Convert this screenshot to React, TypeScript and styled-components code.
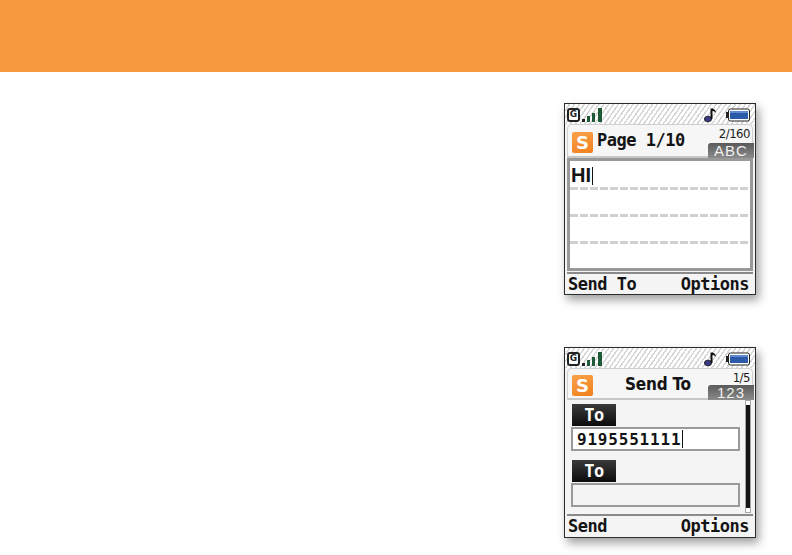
import React from "react";
import styled, { createGlobalStyle } from "styled-components";

const GlobalStyle = createGlobalStyle`
  html, body {
    margin: 0;
    padding: 0;
    background: #fff;
  }
  * { box-sizing: border-box; }
`;

const Page = styled.div`
  width: 792px;
  height: 555px;
  overflow: hidden;
  background: #fff;
`;

const Banner = styled.div`
  height: 72px;
  background: #f79a3e;
`;

const Shots = styled.div`
  display: flex;
  flex-direction: column;
  align-items: flex-end;
  gap: 52px;
  padding: 31px 36px 0 0;
`;

const Phone = styled.div<{ $height: number }>`
  width: 192px;
  height: ${(p) => p.$height}px;
  display: flex;
  flex-direction: column;
  background: #f4f4f4;
  border: 1px solid #2c2c2c;
  box-shadow: 3px 5px 9px rgba(0, 0, 0, 0.38);
`;

const StatusBar = styled.div`
  height: 20px;
  flex: none;
  display: flex;
  align-items: center;
  padding: 1px 5px 0 2px;
  background: repeating-linear-gradient(
    -55deg,
    #fff 0 2.5px,
    #d6d6d6 2.5px 4px
  );
`;

const NetworkBadge = styled.span`
  width: 13px;
  height: 14px;
  margin-right: 2px;
  display: flex;
  align-items: center;
  justify-content: center;
  border: 2px solid #222;
  border-radius: 3px;
  background: #fff;
  color: #222;
  font: bold 9px/1 "DejaVu Sans", sans-serif;
`;

const Spacer = styled.div`
  flex: 1;
`;

const IconGap = styled.div`
  width: 8px;
  flex: none;
`;

const Header = styled.div<{ $height: number; $top: number }>`
  position: relative;
  height: ${(p) => p.$height}px;
  flex: none;
  margin: 0 2px;
  padding: ${(p) => p.$top}px 0 0 4px;
  display: flex;
  align-items: flex-start;
  background: #f6f6f6;
  border: 1px solid #cfcfcf;
  border-bottom: 2px solid #c8c8c8;
  border-radius: 5px 5px 0 0;
`;

const Logo = styled.span`
  width: 21px;
  height: 21px;
  flex: none;
  display: flex;
  align-items: center;
  justify-content: center;
  border-radius: 2px;
  background: linear-gradient(160deg, #f9a34a, #f17f1d);
  color: #fff;
  font: bold 18px/1 "DejaVu Sans", sans-serif;
`;

const PageTitle = styled.span`
  margin-left: 4px;
  margin-top: -2px;
  color: #141414;
  font: bold 17px/21px "DejaVu Sans Mono", monospace;
  letter-spacing: -0.5px;
  white-space: nowrap;
`;

const ScreenTitle = styled.span`
  margin-left: 32px;
  color: #141414;
  font: bold 17px/19px "DejaVu Sans", sans-serif;
  font-stretch: condensed;
  letter-spacing: -0.2px;
  white-space: nowrap;
`;

const Counter = styled.span`
  position: absolute;
  top: 2px;
  right: 2px;
  color: #1c1c1c;
  font: 13px/13px "DejaVu Sans", sans-serif;
  font-stretch: condensed;
  letter-spacing: -0.5px;
`;

const ModeBadge = styled.span`
  position: absolute;
  right: -2px;
  bottom: -2px;
  width: 46px;
  height: 15px;
  display: flex;
  align-items: center;
  justify-content: center;
  border-radius: 3px 0 0 0;
  background: linear-gradient(#5a5a5a, #8b8b8b);
  color: #f0f0f0;
  font: 15px/15px "Liberation Sans", sans-serif;
  letter-spacing: 1px;
`;

const NoteBody = styled.div`
  flex: 1;
  margin: 0 2px;
  padding: 2px 0 0 1px;
  display: flex;
  flex-direction: column;
  background: #fff;
  border: 3px solid #999;
`;

const NoteText = styled.div`
  height: 24px;
  color: #141414;
  font: bold 20px/24px "Liberation Sans", sans-serif;
`;

const Caret = styled.span`
  display: inline-block;
  width: 1px;
  height: 18px;
  margin-left: 1px;
  vertical-align: -3px;
  background: #141414;
`;

const RuledLine = styled.div`
  height: 3px;
  width: 178px;
  flex: none;
  margin: 0 0 24px -1px;
  background: repeating-linear-gradient(90deg, #d0d0d0 0 8px, transparent 8px 10px);
`;

const FormArea = styled.div`
  position: relative;
  flex: 1;
  min-height: 0;
  padding: 4px 0 0 6px;
`;

const RecipientTag = styled.div`
  width: 44px;
  height: 22px;
  margin-left: 1px;
  display: flex;
  align-items: center;
  justify-content: center;
  background: linear-gradient(#3a3a3a, #0c0c0c);
  color: #fff;
  font: bold 17px/1 "DejaVu Sans Mono", monospace;
  letter-spacing: -0.5px;
`;

const RecipientInput = styled.div<{ $filled?: boolean }>`
  width: 169px;
  height: 24px;
  margin: 1px 0 9px;
  padding-left: 4px;
  background: ${(p) => (p.$filled ? "#fff" : "#f4f4f4")};
  border: 2px solid #9a9a9a;
  color: #141414;
  font: bold 16px/22px "DejaVu Sans Mono", monospace;
  letter-spacing: 0.8px;
`;

const Scrollbar = styled.div`
  position: absolute;
  top: 0;
  right: 4px;
  bottom: 0;
  width: 6px;
  display: flex;
  flex-direction: column;
  justify-content: space-between;
  background: #151515;
  border: 1px solid #a8a8a8;
`;

const ScrollEnd = styled.span`
  height: 4px;
  background: #fff;
`;

const Softkeys = styled.div<{ $height: number }>`
  height: ${(p) => p.$height}px;
  flex: none;
  margin: 1px 2px 0;
  padding: 0 4px 0 1px;
  display: flex;
  align-items: center;
  justify-content: space-between;
  border-top: 2px solid #8a8a8a;
  color: #141414;
  font: bold 17px/1 "DejaVu Sans Mono", monospace;
  letter-spacing: -0.5px;
`;

const SignalIcon = () => (
  <svg width="22" height="14" viewBox="0 0 22 14">
    <rect x="0" y="11" width="3" height="3" fill="#222" />
    <rect x="5" y="8" width="3" height="6" fill="#1f5a38" />
    <rect x="10" y="5" width="3" height="9" fill="#1f5a38" />
    <rect x="16" y="0" width="4" height="14" fill="#1f5a38" />
  </svg>
);

const NoteIcon = () => (
  <svg width="14" height="16" viewBox="0 0 14 16">
    <ellipse cx="4" cy="12" rx="3.6" ry="2.8" fill="#3a3a86" stroke="#111" strokeWidth="0.8" />
    <path d="M7.5 12V1.5" stroke="#111" strokeWidth="2" />
    <path d="M8 1.5c2.5 0.5 4 2 4 4.5-1-1.5-2.5-2-4-2z" fill="#111" />
  </svg>
);

const BatteryIcon = () => (
  <svg width="24" height="14" viewBox="0 0 24 14">
    <rect x="0" y="4" width="2" height="6" fill="#222" />
    <rect x="2.5" y="1" width="21" height="12" rx="2" fill="#fff" stroke="#222" />
    <rect x="4" y="3" width="18" height="8" fill="#2a5aa8" />
    <rect x="4" y="3" width="18" height="2" fill="#5f8ad0" />
  </svg>
);

const Status = () => (
  <StatusBar>
    <NetworkBadge>G</NetworkBadge>
    <SignalIcon />
    <Spacer />
    <NoteIcon />
    <IconGap />
    <BatteryIcon />
  </StatusBar>
);

export default function App() {
  return (
    <Page>
      <GlobalStyle />
      <Banner />
      <Shots>
        <Phone $height={192}>
          <Status />
          <Header $height={34} $top={7}>
            <Logo>S</Logo>
            <PageTitle>Page 1/10</PageTitle>
            <Counter>2/160</Counter>
            <ModeBadge>ABC</ModeBadge>
          </Header>
          <NoteBody>
            <NoteText>
              HI
              <Caret />
            </NoteText>
            <RuledLine />
            <RuledLine />
            <RuledLine />
          </NoteBody>
          <Softkeys $height={22}>
            <span>Send To</span>
            <span>Options</span>
          </Softkeys>
        </Phone>
        <Phone $height={191}>
          <Status />
          <Header $height={32} $top={6}>
            <Logo>S</Logo>
            <ScreenTitle>Send To</ScreenTitle>
            <Counter>1/5</Counter>
            <ModeBadge>123</ModeBadge>
          </Header>
          <FormArea>
            <RecipientTag>To</RecipientTag>
            <RecipientInput $filled>
              9195551111
              <Caret />
            </RecipientInput>
            <RecipientTag>To</RecipientTag>
            <RecipientInput />
            <Scrollbar>
              <ScrollEnd />
              <ScrollEnd />
            </Scrollbar>
          </FormArea>
          <Softkeys $height={23}>
            <span>Send</span>
            <span>Options</span>
          </Softkeys>
        </Phone>
      </Shots>
    </Page>
  );
}
